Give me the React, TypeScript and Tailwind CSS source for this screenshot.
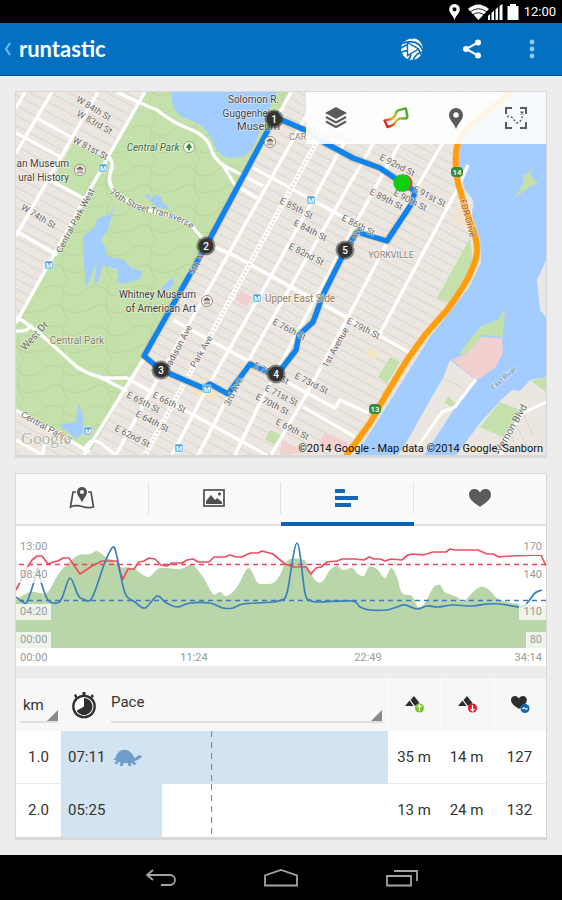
import React from "react";

type Pt = [number, number];

const street = "#6a655f";

const smooth = (p: Pt[]) => {
  let d = `M${p[0][0]} ${p[0][1]}`;
  for (let i = 0; i < p.length - 1; i++) {
    const a = p[i - 1] ?? p[i];
    const b = p[i];
    const c = p[i + 1];
    const e = p[i + 2] ?? c;
    d += `C${b[0] + (c[0] - a[0]) / 6} ${b[1] + (c[1] - a[1]) / 6} ${c[0] - (e[0] - b[0]) / 6} ${c[1] - (e[1] - b[1]) / 6} ${c[0]} ${c[1]}`;
  }
  return d;
};

/* ---------- map ---------- */

type Label = { x: number; y: number; r?: number; t: string; s?: number; c?: string; a?: "start" | "middle" | "end"; i?: boolean };

const labels: Label[] = [
  { x: 92, y: 111, r: 31, t: "W 84th St" },
  { x: 93, y: 125, r: 29, t: "W 83rd St" },
  { x: 89, y: 151, r: 28, t: "W 81st St" },
  { x: 37, y: 219, r: 31, t: "W 74th St" },
  { x: 78, y: 222, r: -62, t: "Central Park West" },
  { x: 295, y: 211, r: 27, t: "E 85th St" },
  { x: 309, y: 233, r: 27, t: "E 84th St" },
  { x: 305, y: 257, r: 27, t: "E 82nd St" },
  { x: 357, y: 228, r: 27, t: "E 86th St" },
  { x: 396, y: 168, r: 27, t: "E 92nd St" },
  { x: 428, y: 199, r: 27, t: "E 91st St" },
  { x: 409, y: 203, r: 27, t: "E 90th St" },
  { x: 385, y: 202, r: 27, t: "E 89th St" },
  { x: 288, y: 332, r: 27, t: "E 76th St" },
  { x: 362, y: 331, r: 27, t: "E 79th St" },
  { x: 310, y: 386, r: 27, t: "E 73rd St" },
  { x: 270, y: 376, r: 27, t: "E 72nd St" },
  { x: 280, y: 398, r: 27, t: "E 71st St" },
  { x: 271, y: 407, r: 27, t: "E 70th St" },
  { x: 291, y: 432, r: 27, t: "E 69th St" },
  { x: 168, y: 405, r: 27, t: "E 66th St" },
  { x: 142, y: 405, r: 27, t: "E 65th St" },
  { x: 151, y: 424, r: 27, t: "E 64th St" },
  { x: 131, y: 439, r: 27, t: "E 62nd St" },
  { x: 338, y: 349, r: -61, t: "1st Avenue" },
  { x: 204, y: 353, r: -60, t: "Park Ave" },
  { x: 180, y: 350, r: -62, t: "Madison Ave" },
  { x: 236, y: 393, r: -63, t: "3rd Ave" },
  { x: 201, y: 262, r: -61, t: "5th Ave" },
  { x: 355, y: 242, r: -61, t: "2nd Ave" },
  { x: 37, y: 338, r: -48, t: "West Dr", s: 10 },
  { x: 45, y: 430, r: 29, t: "Central Park S" },
  { x: 514, y: 430, r: -60, t: "Vernon Blvd", s: 10 },
  { x: 505, y: 380, r: -40, t: "East River", s: 7, c: "#5b7ba8" },
  { x: 465, y: 219, r: 74, t: "FDR Drive", c: "#a0521a" },
  { x: 153, y: 151, t: "Central Park", s: 10, c: "#3d6b35", i: true },
  { x: 77, y: 344, t: "Central Park", s: 10, c: "#8c7d69" },
  { x: 69, y: 167, t: "an Museum", s: 10, c: "#4a4440", a: "end" },
  { x: 69, y: 181, t: "ural History", s: 10, c: "#4a4440", a: "end" },
  { x: 279, y: 103, t: "Solomon R.", s: 10, c: "#4a4440", a: "end" },
  { x: 279, y: 117, t: "Guggenheim", s: 10, c: "#4a4440", a: "end" },
  { x: 280, y: 130, t: "Museum", s: 11, c: "#4a4440", a: "end" },
  { x: 196, y: 298, t: "Whitney Museum", s: 10, c: "#3f3b38", a: "end" },
  { x: 196, y: 312, t: "of American Art", s: 10, c: "#3f3b38", a: "end" },
  { x: 289, y: 140, t: "CARNEGIE HILL", c: "#a3805c", a: "start" },
  { x: 391, y: 258, t: "YORKVILLE", c: "#8c8275" },
  { x: 300, y: 302, t: "Upper East Side", s: 10, c: "#96805f" },
];

const roads = [
  "M145 92L108 157 16 323",
  "M52 92L16 153",
  "M98 92L16 236",
  "M25 92L16 108",
  "M37 118L73 138",
  "M16 133L60 157",
  "M50 180L83 198",
  "M16 231L57 255",
  "M117 92L140 103 157 110Q172 122 185 127 205 134 210 146 213 158 223 165L263 186",
  "M223 165L235 185 257 198",
  "M108 157Q113 160 112 168 105 184 117 193 135 207 155 212 185 219 192 226L207 244 233 255 300 292 348 318",
  "M16 317Q30 324 47 340L77 367Q88 374 100 377L127 391",
  "M16 331Q28 332 30 326",
  "M100 378Q112 378 127 378L155 394 190 413 267 455",
  "M16 410L90 452",
  "M16 440L42 455 46 440",
  "M291 92L146 355 84 455",
  "M318 95L215 278 157 380 116 455",
  "M372 92L270 278 207 388 172 455",
  "M403 92L300 270 230 393 198 455",
  "M428 92L340 252 260 403 235 455",
  "M473 92L415 190 348 317 305 397 271 455",
  "M468 165L457 190 378 337",
  "M253 168L290 188 345 218 387 241",
  "M173 320L228 350 307 393 335 408 340 400 368 413",
  "M348 318L378 335 410 353",
  "M303 407L355 437",
  "M84 451Q90 436 100 443L116 455",
];

const fdr = "M512 92L475 122Q460 134 457 146 454 160 458 183L465 207 473 230Q481 250 473 267 466 285 447 310L425 335 407 360 387 393 370 423 346 456";

const route =
  "M402 183L380 168 353 158 325 143 305 130 275 117 206 246 144 356 161 370 203 388 210 384 228 394 250 364 276 376 296 350 299 335 313 322 323 295 346 249 357 232 387 241 412 203 415 191Z";

function Metro({ x, y }: { x: number; y: number }) {
  return (
    <g>
      <rect x={x - 4} y={y - 4} width="8" height="8" rx="1" fill="#4ba3dd" stroke="#fff" strokeWidth="0.6" />
      <text x={x} y={y + 3} fontSize="7" fontWeight="700" fill="#fff" textAnchor="middle">M</text>
    </g>
  );
}

function MuseumPin({ x, y }: { x: number; y: number }) {
  return (
    <g transform={`translate(${x} ${y})`}>
      <circle r="5.5" fill="#fff" stroke="#8a7a6c" strokeWidth="0.9" />
      <path d="M-3.4-1L0-3.4 3.4-1ZM-3 2.8H3M-2-.5V2.4M0-.5V2.4M2-.5V2.4" fill="#7b6254" stroke="#7b6254" strokeWidth="0.8" />
    </g>
  );
}

function Shield({ x, y, t }: { x: number; y: number; t: string }) {
  return (
    <g>
      <rect x={x - 6} y={y - 5} width="12" height="10" rx="4" fill="#3a8a3c" />
      <text x={x} y={y + 3} fontSize="8" fontWeight="500" fill="#fff" textAnchor="middle">{t}</text>
    </g>
  );
}

function StreetMap() {
  return (
    <svg viewBox="16 92 530 363" className="block w-full font-['Roboto',sans-serif]" role="img" aria-label="Map of the run">
      <defs>
        <pattern id="blocks" width="60" height="9" patternUnits="userSpaceOnUse" patternTransform="rotate(28)">
          <rect width="60" height="9" fill="#ebe6e0" />
          <path d="M0 4.500H60" stroke="#d9d4cc" strokeWidth="0.9" />
        </pattern>
        <pattern id="trails" width="44" height="40" patternUnits="userSpaceOnUse">
          <rect width="44" height="40" fill="#c4e1ab" />
          <path d="M0 8Q12 2 20 12T44 8M20 12Q14 26 24 40M24 0Q18 5 20 12M0 30Q14 20 19 28T44 30" fill="none" stroke="#b7d29c" strokeWidth="0.8" />
        </pattern>
        <path id="transverse" d="M109 193Q128 208 150 213 180 219 192 230" />
        <radialGradient id="dot">
          <stop offset="0" stopColor="#00d900" />
          <stop offset="1" stopColor="#12cf12" />
        </radialGradient>
      </defs>
      <rect x="16" y="92" width="530" height="363" fill="url(#blocks)" />
      <path d="M145 92H291L146 355 90 452 16 410V323L108 157Z" fill="url(#trails)" />
      <path d="M73 143L106 158 84 197 52 180Z" fill="#c4e1ab" />
      <g fill="#a3ccff">
        <path d="M172 92Q170 108 180 116L197 123Q208 130 212 140 218 158 233 158 248 158 254 145L268 112 277 92Z" />
        <path d="M144 195Q148 194 152 198 157 192 161 197L162 203Q170 206 168 209L158 208Z" />
        <path d="M115 203L110 215Q98 216 96 222 94 230 84 235 82 245 84 262L86 288 91 277 97 262 107 260 105 247 101 240 107 231 110 222Z" />
        <path d="M97 262L107 256 124 260 131 268 143 271 140 279 123 284 117 281 119 270 103 265 98 282 94 284Z" />
        <path d="M160 289L172 278 174 283 168 291Z" />
        <path d="M59 425L76 422 79 403 83 416 84 433 75 438 68 432Z" />
        <path d="M546 92H505L462 132 458 160 464 188 473 200 472 215 480 240 481 262 470 286 430 337 392 398 356 455H546Z" />
      </g>
      <path d="M463 188L472 199 474 206 469 213Z" fill="#ebe6e0" />
      <path d="M456 205L463 204 471 229 450 222Z" fill="#f2e3d0" />
      <g fill="#ebe6e0">
        <path d="M450 360L443 378 430 400 409 438 398 455H424L455 408 477 381Z" />
        <path d="M546 260L537 280 540 310 546 317Z" />
        <path d="M546 377L530 380 520 391 512 390 500 401 480 423 456 455H546Z" />
      </g>
      <path d="M456 385L468 392M443 378L462 387M523 413L533 435M512 418L528 448M500 402L518 455M480 426L503 437" stroke="#d8d3cb" strokeWidth="0.9" fill="none" />
      <g fill="#c4e1ab">
        <path d="M533 168L530 175 538 183 529 187 515 198 523 183 523 176Z" />
        <path d="M505 309L503 337 483 335 467 355 459 354 471 338 481 326 498 320Z" />
        <path d="M500 402L522 411 503 437 480 427Z" />
        <path d="M546 377L531 381 546 392Z" />
        <path d="M470 238L473 262 450 303 437 298Z" />
        <path d="M390 357L400 362 387 383 378 377Z" />
        <path d="M270 430L282 435 277 445 265 440Z" />
        <path d="M449 397L456 404 451 407 444 402Z" />
      </g>
      <g fill="#f3d0d0">
        <path d="M482 337L502 338 503 353 495 368 477 380 463 370 452 360 467 353Z" />
        <path d="M241 290L252 297 247 307 235 300Z" />
        <path d="M282 440L305 453 280 455Z" />
        <path d="M325 432L350 444 340 452 318 444Z" />
      </g>
      <path d="M186 378L206 392 215 388 216 400 198 397ZM370 348L378 352 374 360 366 356Z" fill="#f3e6c0" />
      <g fill="none" stroke="#fff" strokeLinejoin="round">
        {roads.map((d) => <path key={d} d={d} strokeWidth="3.4" />)}
        <path d="M344 92L145 455" strokeWidth="5" />
        <path d="M344 92L145 455" stroke="#ddd8d0" strokeWidth="2.600" strokeDasharray="1.500 2.500" />
        <path d="M476 379L455 407 442 412 418 446M546 402L523 413 508 436 500 455" strokeWidth="3" />
      </g>
      <path d={fdr} fill="none" stroke="#f4be62" strokeWidth="6.600" />
      <path d={fdr} fill="none" stroke="#ff9e0d" strokeWidth="5.400" />
      <path d={route} fill="none" stroke="#e8b878" strokeOpacity="0.45" strokeWidth="8" strokeLinejoin="round" />
      <path d={route} fill="none" stroke="#0d84f2" strokeWidth="5.400" strokeLinejoin="round" />
      <g stroke="#fff" strokeWidth="1.500" strokeOpacity="0.55" paintOrder="stroke">
        {labels.map((l) => (
          <text key={`${l.t}${l.x}`} transform={`translate(${l.x} ${l.y}) rotate(${l.r ?? 0})`} fontSize={l.s ?? 9} fill={l.c ?? street} textAnchor={l.a ?? "middle"} fontStyle={l.i ? "italic" : "normal"}>
            {l.t}
          </text>
        ))}
        <text fontSize="9" fill={street}>
          <textPath href="#transverse">79th Street Transverse</textPath>
        </text>
      </g>
      {([[103, 168], [49, 265], [311, 200], [257, 298], [207, 389], [88, 431], [179, 448]] as Pt[]).map(([x, y]) => <Metro key={x} x={x} y={y} />)}
      {([[80, 170], [270, 142], [207, 301]] as Pt[]).map(([x, y]) => <MuseumPin key={x} x={x} y={y} />)}
      <circle cx="189" cy="147" r="5.500" fill="#fff" stroke="#7fa36b" strokeWidth="0.900" />
      <path d="M189 143.500L191.500 147.500H189.600V150H188.400V147.500H186.500Z" fill="#2f8a2f" stroke="#2f8a2f" />
      <Shield x={457} y={172} t="14" />
      <Shield x={375} y={409} t="13" />
      {([[274, 119], [206, 246], [161, 370], [276, 374], [345, 250]] as Pt[]).map(([x, y], i) => (
        <g key={x}>
          <circle cx={x} cy={y} r="9.500" fill="#333" fillOpacity="0.550" />
          <circle cx={x} cy={y} r="7.500" fill="#333" />
          <text x={x} y={y + 3.5} fontSize="10" fontWeight="500" fill="#fff" textAnchor="middle">{i + 1}</text>
        </g>
      ))}
      <circle cx="404" cy="183" r="8.500" fill="#e0473c" />
      <circle cx="402" cy="183" r="8.700" fill="url(#dot)" />
      <circle cx="402" cy="183" r="5.500" fill="none" stroke="#2fb52f" />
      <text x="21" y="444" fontSize="17" fill="#aab49f" stroke="#fff" strokeWidth="0.800" paintOrder="stroke" className="font-['Liberation_Serif',serif]">Google</text>
      <text x="543" y="452" fontSize="11" fill="#111" textAnchor="end">©2014 Google - Map data ©2014 Google, Sanborn</text>
    </svg>
  );
}

const LayersIcon = () => (
  <svg width="22" height="22" viewBox="0 0 22 22" fill="#5b5b5b">
    <path d="M11 0L22 6 11 12 0 6Z" />
    <path d="M1 10L11 15.500 21 10M1 14.500L11 20 21 14.500" fill="none" stroke="#5b5b5b" strokeWidth="2" />
  </svg>
);
const TraceIcon = () => (
  <svg width="26" height="22" viewBox="0 0 26 22">
    <defs>
      <linearGradient id="heat" x1="0" y1="1" x2="1" y2="0.200">
        <stop offset="0.150" stopColor="#e8201a" />
        <stop offset="0.450" stopColor="#f2b51c" />
        <stop offset="0.850" stopColor="#46a528" />
      </linearGradient>
    </defs>
    <path d="M1.500 13.500C5 12 9 13 11.500 9.500 13.500 6.500 12.500 4.500 15 3.500L22 1.500C24 1.200 22.800 5 24.300 8.500 25 11 22.500 12 19.500 11.500 15 11 13.500 13.500 11.500 16.500 9 19.500 6 19 4.500 20Z" fill="none" stroke="url(#heat)" strokeWidth="2.300" strokeLinejoin="round" />
  </svg>
);
const PinIcon = ({ fill, w, h }: { fill: string; w: number; h: number }) => (
  <svg width={w} height={h} viewBox="0 0 14 21">
    <path fillRule="evenodd" d="M7 0A7 7 0 0 1 14 7C14 12 9 15 7 21 5 15 0 12 0 7A7 7 0 0 1 7 0ZM7 4.300A2.700 2.700 0 1 0 7 9.700 2.700 2.700 0 0 0 7 4.300Z" fill={fill} />
  </svg>
);
const ExpandIcon = () => (
  <svg width="22" height="22" viewBox="0 0 22 22" fill="none" stroke="#5b5b5b" strokeWidth="2">
    <path d="M1 7V1H7M15 1H21V7M21 15V21H15M7 21H1V15" />
    <path d="M2 9.500H5L8 11 9 13 12 16 15 14.500 17 11V8" strokeWidth="1.500" strokeDasharray="2 2" />
    <path d="M15.500 4.500L18.500 7.500M18.500 4.500L15.500 7.500" strokeWidth="1.200" />
  </svg>
);

/* ---------- chart ---------- */

const elevation: Pt[] = [[16, 600], [19, 598], [30, 592], [40, 593], [48, 592], [60, 572], [77, 556], [90, 554], [97, 551], [107, 558], [113, 560], [120, 567], [133, 568], [148, 577], [160, 568], [180, 569], [192, 565], [203, 577], [213, 594], [220, 592], [227, 596], [237, 587], [247, 569], [252, 572], [257, 582], [263, 584], [273, 583], [280, 575], [288, 560], [304, 560], [308, 568], [315, 580], [322, 582], [330, 570], [337, 566], [343, 570], [352, 568], [358, 574], [364, 576], [369, 567], [377, 569], [385, 578], [391, 568], [397, 577], [402, 593], [412, 596], [418, 607], [425, 603], [433, 588], [440, 585], [445, 592], [457, 597], [463, 602], [472, 593], [480, 587], [488, 589], [497, 598], [507, 602], [520, 604], [546, 606]];
const heart: Pt[] = [[16, 590], [27, 568], [32, 560], [37, 556], [42, 556], [48, 564], [53, 562], [58, 561], [63, 558], [69, 558], [80, 574], [92, 566], [102, 561], [117, 561], [120, 572], [123, 579], [128, 569], [134, 569], [139, 562], [144, 561], [149, 558], [155, 559], [161, 565], [167, 566], [172, 563], [182, 563], [187, 560], [193, 559], [198, 562], [209, 562], [214, 557], [225, 557], [230, 555], [236, 557], [242, 557], [250, 553], [258, 553], [262, 551], [273, 554], [285, 564], [293, 567], [306, 567], [311, 574], [316, 568], [321, 567], [327, 562], [337, 561], [342, 559], [355, 559], [364, 560], [369, 557], [374, 559], [380, 559], [385, 561], [391, 559], [402, 560], [408, 555], [413, 554], [423, 555], [433, 552], [446, 552], [450, 549], [455, 550], [478, 550], [487, 554], [493, 554], [499, 557], [510, 556], [541, 555], [546, 566]];
const pace: Pt[] = [[16, 597], [23, 602], [27, 602], [34, 582], [38, 568], [41, 582], [48, 600], [57, 603], [62, 598], [70, 578], [78, 595], [83, 599], [92, 598], [105, 562], [113, 547], [117, 557], [125, 593], [135, 602], [145, 608], [157, 596], [165, 602], [177, 607], [190, 603], [210, 603], [223, 608], [233, 608], [243, 604], [273, 602], [281, 600], [287, 593], [297, 543], [305, 593], [310, 600], [318, 602], [352, 601], [360, 607], [370, 610], [387, 610], [397, 607], [405, 605], [417, 609], [427, 606], [438, 607], [453, 605], [472, 606], [487, 604], [500, 604], [521, 607], [528, 602], [535, 593], [542, 590]];

const tick = "bg-white/75 px-1 text-[11px] leading-4";

function Chart() {
  return (
    <figure className="bg-white font-['Roboto',sans-serif] text-[#9a9a9a]">
      <div className="relative h-[122px]">
        <svg className="block h-full w-full" viewBox="16 526 530 122" preserveAspectRatio="none" role="img" aria-label="Pace, heart rate and elevation">
          <path d={`${smooth(elevation)}V648H16Z`} fill="#b8d6aa" />
          <path d="M19 564.500H546" stroke="#e8435c" strokeWidth="1.500" strokeDasharray="5 4" />
          <path d="M19 600.500H546" stroke="#3f7cb5" strokeWidth="1.500" strokeDasharray="5 4" />
          <path d={`M${heart.join("L")}`} fill="none" stroke="#f04e60" strokeWidth="1.700" strokeLinejoin="round" />
          <path d={smooth(pace)} fill="none" stroke="#3a80bd" strokeWidth="1.700" />
        </svg>
        <div className="absolute inset-y-0 left-0 flex flex-col items-start justify-between pt-[13px]">
          <div className="flex flex-col gap-3">
            <span className={tick}>13:00</span>
            <span className={tick}>08:40</span>
          </div>
          <div className="flex flex-col gap-3">
            <span className={tick}>04:20</span>
            <span className={tick}>00:00</span>
          </div>
        </div>
        <div className="absolute inset-y-0 right-0 flex flex-col items-end justify-between pt-[13px]">
          <div className="flex flex-col items-end gap-3">
            <span className={tick}>170</span>
            <span className={tick}>140</span>
          </div>
          <div className="flex flex-col items-end gap-3">
            <span className={tick}>110</span>
            <span className={tick}>80</span>
          </div>
        </div>
      </div>
      <figcaption className="grid h-[18px] grid-cols-6 px-1 pt-1 text-center text-[11px] leading-3">
        <span className="text-left">00:00</span>
        <span className="col-span-2">11:24</span>
        <span className="col-span-2">22:49</span>
        <span className="text-right">34:14</span>
      </figcaption>
    </figure>
  );
}

/* ---------- tabs ---------- */

const HEART = "M11 18C8 15 0 12 0 5.500 0 2 2.500 0 5.500 0 8 0 10 1.500 11 3.500 12 1.500 14 0 16.500 0 19.500 0 22 2 22 5.500 22 12 14 15 11 18Z";

const tabs: { name: string; icon: React.ReactNode }[] = [
  {
    name: "Map",
    icon: (
      <svg width="26" height="22" viewBox="0 0 26 22">
        <path d="M7 5H4L1.500 20Q7 17.500 13 19.500 19 21.500 24.500 20L22 5H19" fill="none" stroke="#4f4f4f" strokeWidth="1.700" />
        <path fillRule="evenodd" d="M13 0A5 5 0 0 1 18 5C18 9 14.500 11 13 15.500 11.500 11 8 9 8 5A5 5 0 0 1 13 0ZM13 3A2 2 0 1 0 13 7 2 2 0 0 0 13 3Z" fill="#4f4f4f" />
      </svg>
    ),
  },
  {
    name: "Photos",
    icon: (
      <svg width="22" height="18" viewBox="0 0 22 18">
        <rect x="1" y="1" width="20" height="16" fill="none" stroke="#4f4f4f" strokeWidth="1.700" />
        <path d="M3 15V12L8 6 12 11 14 9 19 13V15Z" fill="#4f4f4f" />
        <circle cx="16.500" cy="5" r="1.600" fill="#4f4f4f" />
      </svg>
    ),
  },
  {
    name: "Splits",
    icon: (
      <svg width="23" height="18" viewBox="0 0 23 18" fill="#1467b5">
        <path d="M0 0H10V4H0ZM0 7H23V11H0ZM0 14H16V18H0Z" />
      </svg>
    ),
  },
  {
    name: "Heart rate",
    icon: (
      <svg width="22" height="18" viewBox="0 0 22 18">
        <path d={HEART} fill="#5b5b5b" />
      </svg>
    ),
  },
];

/* ---------- splits ---------- */

const Stopwatch = () => (
  <svg width="26" height="28" viewBox="0 0 26 28" className="shrink-0">
    <circle cx="13" cy="15.500" r="10.700" fill="#fff" stroke="#2f2f2f" strokeWidth="2.300" />
    <path d="M13 15.500V7A8.500 8.500 0 1 1 5.600 19.700Z" fill="#2f2f2f" />
    <path d="M11.500 1H14.500V4.500H11.500ZM3 4L5 3 6.500 6 4.500 7.500ZM21 3L23 5 21.500 7 19.500 5.500Z" fill="#2f2f2f" />
  </svg>
);

const Turtle = () => (
  <svg width="29" height="18" viewBox="0 0 29 18" fill="#6f9fc8" role="img" aria-label="Slowest">
    <path d="M0 10.500L2.500 9C3.500 4 7 .8 11.500 .8 16.500 .8 19.500 4.500 21.500 9L24 7.500C25.500 6 28 6 28.800 7.200 29 8.500 27.500 9.200 26.500 9.500 25 11 23.500 11.800 21 12L23.500 15 21 16 17.500 13.300 18.500 17H15.500L14.500 14H10.500L10 17H7L7.500 13.500 5.500 13 4 15.500 1.500 14.500 3.500 11.500Z" />
  </svg>
);

const Climb = ({ down }: { down?: boolean }) => (
  <svg width="20" height="18" viewBox="0 0 20 18" className="mx-auto" role="img" aria-label={down ? "Descent" : "Ascent"}>
    <path d="M0 10L4.500 4.500 8.500 10ZM5.500 4L9 0 14.500 7 10 10Z" fill="#2d2d2d" />
    <circle cx="14.500" cy="12" r="4.500" fill={down ? "#e3192d" : "#79c421"} />
    <path d={down ? "M14.500 9V14.500M12.500 12.800L14.500 15 16.500 12.800" : "M14.500 15V9.500M12.500 11.200L14.500 9 16.500 11.200"} fill="none" stroke="#fff" strokeWidth="1.200" />
  </svg>
);

const Pulse = () => (
  <svg width="19" height="18" viewBox="0 0 19 18" className="mx-auto" role="img" aria-label="Heart rate">
    <path d={HEART} fill="#2d2d2d" transform="scale(0.720)" />
    <circle cx="14" cy="12.500" r="4.500" fill="#1463b0" />
    <path d="M11.500 13.200Q12.800 11 14 12.500T16.500 12" fill="none" stroke="#fff" strokeWidth="1.200" />
  </svg>
);

function Picker({ label, box, text }: { label: string; box: string; text: string }) {
  return (
    <label className={`relative block border-b-2 border-[#dedede] ${box}`}>
      <select aria-label={text} className="block h-full w-full appearance-none bg-transparent text-[15px] leading-4 text-[#333] outline-none">
        <option>{label}</option>
      </select>
      <span className="pointer-events-none absolute bottom-0 right-0 border-b-[11px] border-l-[11px] border-b-[#8a8a8a] border-l-transparent" />
    </label>
  );
}

const splits = [
  { km: "1.0", pace: "07:11", slow: true, share: 100, up: "35 m", down: "14 m", bpm: 127 },
  { km: "2.0", pace: "05:25", slow: false, share: 31, up: "13 m", down: "24 m", bpm: 132 },
];

function Splits() {
  return (
    <table className="w-full table-fixed border-separate border-spacing-0 bg-white font-['Roboto',sans-serif] text-[15px] text-[#333]">
      <colgroup>
        <col className="w-[45px]" />
        <col />
        <col className="w-[52px]" />
        <col className="w-[53px]" />
        <col className="w-[53px]" />
      </colgroup>
      <thead>
        <tr className="h-[53px] bg-[#f7f7f7]">
          <th className="p-0 pl-1 pr-[3px] font-normal">
            <Picker label="km" text="Distance unit" box="h-8 mt-1 pl-[3px] pb-[2px]" />
          </th>
          <th className="p-0 font-normal">
            <div className="flex items-center gap-[14px] pl-[10px] pr-[6px]">
              <Stopwatch />
              <div className="grow">
                <Picker label="Pace" text="Value shown" box="h-9 pb-1" />
              </div>
            </div>
          </th>
          <th className="border-l-2 border-[#fafafa] p-0"><Climb /></th>
          <th className="border-l-2 border-[#fafafa] p-0"><Climb down /></th>
          <th className="border-l-2 border-[#fafafa] p-0"><Pulse /></th>
        </tr>
      </thead>
      <tbody>
        {splits.map((s) => (
          <tr key={s.km} className="h-[53px] text-center shadow-[inset_0_-1px_0_#e4eaf0] last:shadow-none">
            <td className="p-0">{s.km}</td>
            <td className="p-0">
              <div className="relative h-[53px]">
                <div className="absolute inset-y-0 left-0 bg-[#d2e3f1]" style={{ width: `${s.share}%` }} />
                <svg className="absolute inset-y-0 left-[46%] h-full w-[2px]" viewBox="0 0 2 53" preserveAspectRatio="none">
                  <path d="M.500 0V53" stroke="#6f8fae" strokeWidth="1.200" strokeDasharray="6 5" />
                </svg>
                <div className="relative flex h-full items-center gap-2 pl-[7px]">
                  <span>{s.pace}</span>
                  {s.slow && <Turtle />}
                </div>
              </div>
            </td>
            <td className="p-0">{s.up}</td>
            <td className="p-0">{s.down}</td>
            <td className="p-0">{s.bpm}</td>
          </tr>
        ))}
      </tbody>
    </table>
  );
}

/* ---------- page ---------- */

const card = "border border-b-[3px] border-[#d8d8d8]";

export default function App() {
  return (
    <div className="flex min-h-screen flex-col bg-[#ededed] font-['Roboto',sans-serif]">
      <div className="flex h-[23px] items-center justify-end bg-black pr-[6px] text-white">
        <PinIcon fill="#fff" w={11} h={16} />
        <svg className="ml-2" width="35" height="16" viewBox="0 0 35 16">
          <path d="M0 5Q10-4 21 5L10.500 16Z" fill="#fff" />
          <path d="M2 8Q10.500 1.500 19 8M4.500 11Q10.500 6.500 16.500 11" fill="none" stroke="#000" strokeWidth="0.900" />
          <path d="M20 16V12L22 10V16ZM23.500 16V9L26 6.500V16ZM27.500 16V5.500L30 3V16ZM31.500 16V2L34.500 0V16Z" fill="#fff" />
        </svg>
        <svg className="ml-1" width="12" height="16" viewBox="0 0 12 16">
          <path d="M3 0H9V2H11.500V16H.5V2H3Z" fill="#fff" />
        </svg>
        <span className="ml-[5px] text-[13px] leading-4">12:00</span>
      </div>

      <header className="flex h-[53px] items-center border-b border-[#0a5590] bg-[#0470c2] pl-1">
        <a href="#back" aria-label="Back" className="flex items-center text-white">
          <svg width="8" height="14" viewBox="0 0 8 14">
            <path d="M6 1L2 7 6 13" fill="none" stroke="#6cc0f4" strokeWidth="2" />
          </svg>
          <span className="ml-[7px] font-['Lato',sans-serif] text-[22px] font-bold leading-7">runtastic</span>
        </a>
        <nav className="ml-auto flex">
          <button aria-label="Replay" className="flex h-[52px] w-[60px] items-center justify-center">
            <svg width="24" height="22" viewBox="0 0 24 22">
              <defs>
                <clipPath id="globe"><circle cx="12" cy="11" r="11" /></clipPath>
              </defs>
              <g clipPath="url(#globe)">
                <circle cx="12" cy="11" r="11" fill="#fff" />
                <g fill="none" stroke="#0470c2">
                  <path d="M2 6Q7-1 13 .500" strokeWidth="1.600" />
                  <path d="M3 5.500Q12 1.500 19 6.500 22 9 23 13" strokeWidth="1.700" />
                  <path d="M0 11Q6 5.500 12 7.500L18 11Q20 13 21 17" strokeWidth="1.700" />
                  <path d="M0 15.500Q5 11 10 14.500 12 18 8 22" strokeWidth="1.700" />
                  <path d="M23 14Q17 14 13 22" strokeWidth="1.700" />
                </g>
              </g>
              <path d="M7.500 4.500L18.500 11 7.500 17.500Z" fill="#fff" stroke="#0470c2" strokeWidth="1.400" />
            </svg>
          </button>
          <button aria-label="Share" className="flex h-[52px] w-[60px] items-center justify-center">
            <svg width="20" height="20" viewBox="0 0 20 20" fill="#fff">
              <path d="M16 3.500L4 10 16 16.500" fill="none" stroke="#fff" strokeWidth="2" />
              <circle cx="16" cy="3.500" r="3" />
              <circle cx="4" cy="10" r="3" />
              <circle cx="16" cy="16.500" r="3" />
            </svg>
          </button>
          <button aria-label="More" className="flex h-[52px] w-[60px] items-center justify-center">
            <svg width="6" height="20" viewBox="0 0 6 20" fill="#86cdf8">
              <circle cx="3" cy="3" r="2.400" />
              <circle cx="3" cy="10" r="2.400" />
              <circle cx="3" cy="17" r="2.400" />
            </svg>
          </button>
        </nav>
      </header>

      <main className="flex grow flex-col gap-[15px] p-[15px]">
        <section className={`relative ${card}`}>
          <StreetMap />
          <div className="absolute right-0 top-0 flex h-[52px] w-60 bg-white/90">
            <button aria-label="Layers" className="flex grow basis-0 items-center justify-center"><LayersIcon /></button>
            <button aria-label="Coloured trace" className="flex grow basis-0 items-center justify-center"><TraceIcon /></button>
            <button aria-label="Markers" className="flex grow basis-0 items-center justify-center"><PinIcon fill="#5b5b5b" w={14} h={21} /></button>
            <button aria-label="Full screen" className="flex grow basis-0 items-center justify-center"><ExpandIcon /></button>
          </div>
        </section>

        <section className={card}>
          <div role="tablist" className="flex h-[52px] bg-[#fafafa]">
            {tabs.map((t, i) => (
              <button
                key={t.name}
                role="tab"
                aria-label={t.name}
                aria-selected={i === 2}
                className={`flex grow basis-0 items-center ${i === 2 ? "border-b-4 border-[#0b62b0]" : "border-b-2 border-[#e2e2e2] pb-[2px]"}`}
              >
                <span className={`flex h-8 grow items-center justify-center ${i < 3 ? "border-r border-[#e4e4e4]" : ""}`}>{t.icon}</span>
              </button>
            ))}
          </div>
          <Chart />
          <div className="h-3 bg-[#ededed]" />
          <Splits />
        </section>
      </main>

      <nav className="flex h-[45px] items-center justify-center gap-[87px] bg-black">
        <button aria-label="Back">
          <svg width="34" height="18" viewBox="0 0 34 18" fill="none" stroke="#a3a3a3" strokeWidth="1.800">
            <path d="M10 1L4 6 10 11M4 6H27A5 5 0 0 1 27 16H18" />
          </svg>
        </button>
        <button aria-label="Home">
          <svg width="34" height="18" viewBox="0 0 34 18" fill="none" stroke="#a3a3a3" strokeWidth="1.800">
            <path d="M1 16.500V6.500L17 1 33 6.500V16.500Z" />
          </svg>
        </button>
        <button aria-label="Recent apps">
          <svg width="34" height="18" viewBox="0 0 34 18" fill="none" stroke="#a3a3a3" strokeWidth="1.800">
            <path d="M2 7H26V16.500H2ZM9 2H32V12" />
          </svg>
        </button>
      </nav>
    </div>
  );
}
